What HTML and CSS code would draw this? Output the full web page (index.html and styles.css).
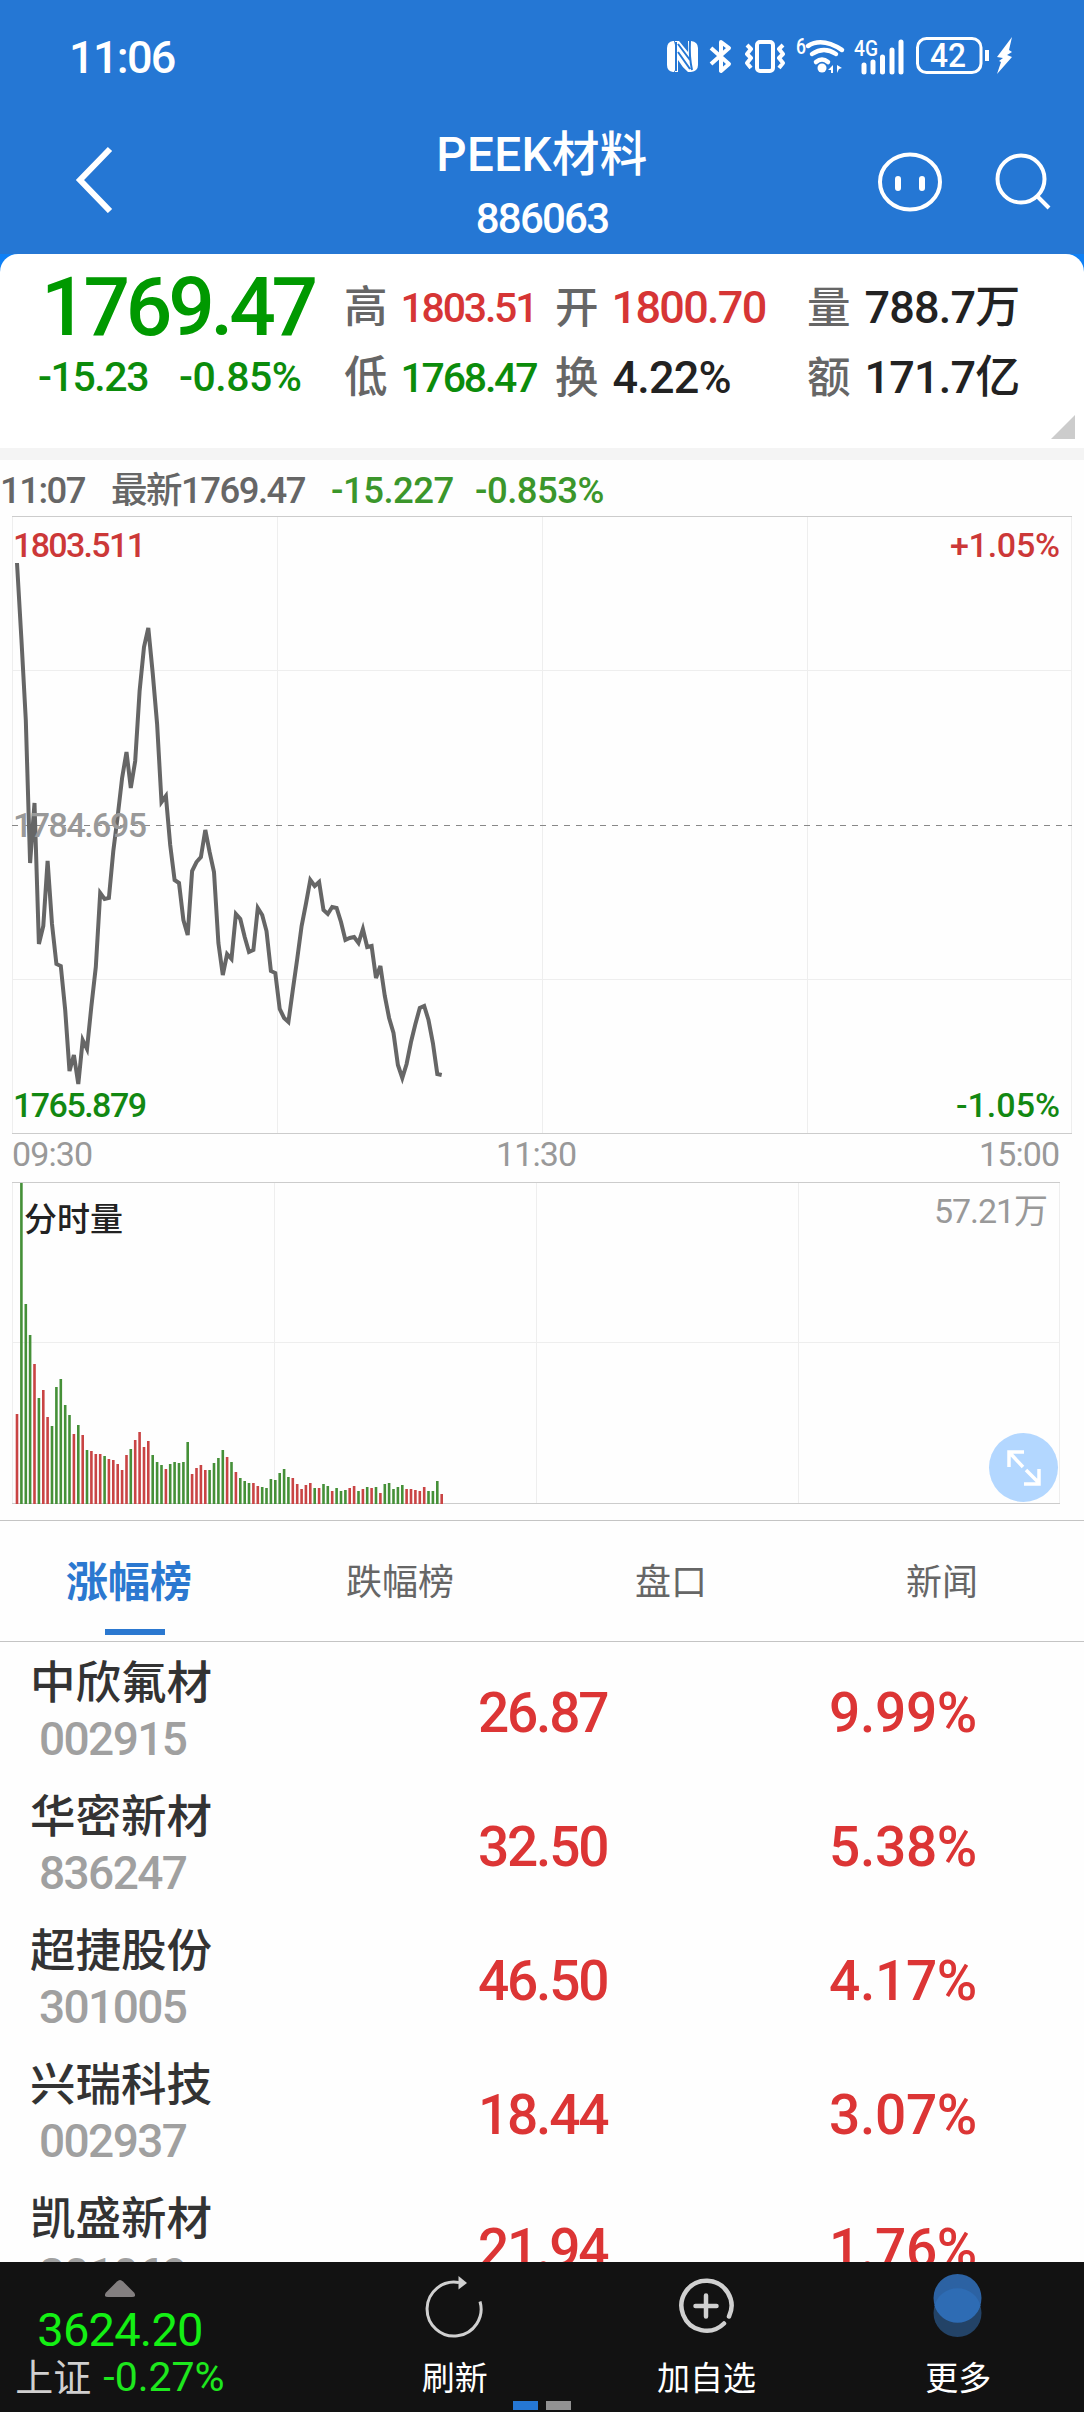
FILE: index.html
```
<!DOCTYPE html>
<html lang="zh-CN">
<head>
    <meta charset="UTF-8">
    <meta name="viewport" content="width=device-width, initial-scale=1.0">
    <title>PEEK材料 886063</title>
    <link rel="stylesheet" href="styles.css">
</head>
<body>
    <div class="app">
        <header class="header">
            <div class="status-bar">
                <span class="status-time">11:06</span>
                <svg class="status-icons" width="352" height="44" viewBox="664 34 352 44">
                    <!-- NFC -->
                    <path class="fill" d="M673 41h1l1 4v25l-1 2h-1q-6-1-6-7V48q0-6 6-7zM675 41h4l9 11V41h3q7 1 7 7v17q0 6-7 7h-3q-6-5-10-12v12h-3z"/>
                    <path class="cut" d="M676 42v29M690 41q-1 15 2 29M678 52l12 17M678 44l12 16"/>
                    <!-- Bluetooth -->
                    <path class="line" d="M711 48l18 16-8 7V42l8 6-18 16"/>
                    <!-- Vibrate -->
                    <rect class="line" x="757" y="42" width="16" height="29" rx="3"/>
                    <path class="line" d="M747 45l4 4-4 5 4 4-4 5 4 5M783 45l-4 4 4 5-4 4 4 5-4 5"/>
                    <!-- Wi-Fi -->
                    <path class="line wifi" d="M808 46q14-9 34 4M812 54q12-8 24 0M816 62q6-5 12 0"/>
                    <circle class="fill" cx="822" cy="68" r="4.5"/>
                    <path class="fill" d="M833 65v8h-2v-3h-3zM837 65l5 3-3 1-2 4z"/>
                    <text class="tiny" x="796" y="54" textLength="10" lengthAdjust="spacingAndGlyphs">6</text>
                    <text class="tiny" x="854" y="56" textLength="24" lengthAdjust="spacingAndGlyphs">4G</text>
                    <!-- Signal -->
                    <path class="line bars" d="M864 65v7M873 62v10M882.500 57v15M892 50v22M901 42v30"/>
                    <!-- Battery -->
                    <rect class="line thin" x="917.500" y="38.500" width="63.500" height="34" rx="9"/>
                    <text class="level" x="930" y="67" textLength="36" lengthAdjust="spacingAndGlyphs">42</text>
                    <path class="line" d="M987 50v11"/>
                    <path class="fill" d="M1012 37l-15 20 6 1-4 3 2 1-4 12 15-17-5-2 5-3-3-2z"/>
                </svg>
            </div>
            <div class="title-bar">
                <svg class="back" width="40" height="68" viewBox="0 0 40 68">
                    <path d="M36 4L6 35l30 31"/>
                </svg>
                <div class="title">
                    <h1 class="title-name">PEEK材料</h1>
                    <div class="title-code">886063</div>
                </div>
                <div class="title-actions">
                    <svg width="68" height="64" viewBox="0 0 68 64">
                        <ellipse cx="34" cy="32" rx="30" ry="27.500"/>
                        <path class="eyes" d="M22 29v9M46 29v9"/>
                    </svg>
                    <svg width="60" height="60" viewBox="0 0 60 60">
                        <circle cx="28" cy="29" r="23.500"/>
                        <path d="M44 46l12 12"/>
                    </svg>
                </div>
            </div>
        </header>

        <div class="quote-wrap">
            <section class="quote">
                <div class="quote-main">
                    <div class="price">1769.47</div>
                    <div class="change"><span>-15.23</span><span class="rate">-0.85%</span></div>
                </div>
                <div class="stats">
                    <div class="stat"><span class="label">高</span><span class="value small up">1803.51</span></div>
                    <div class="stat"><span class="label">开</span><span class="value up">1800.70</span></div>
                    <div class="stat"><span class="label">量</span><span class="value wide">788.7万</span></div>
                    <div class="stat"><span class="label">低</span><span class="value small down">1768.47</span></div>
                    <div class="stat"><span class="label">换</span><span class="value wide">4.22%</span></div>
                    <div class="stat"><span class="label">额</span><span class="value wide">171.7亿</span></div>
                </div>
                <i class="corner"></i>
            </section>
        </div>

        <div class="ticker">
            <span class="ticker-time">11:07</span>
            <span class="ticker-last">最新1769.47</span>
            <span class="ticker-diff">-15.227</span>
            <span class="ticker-rate">-0.853%</span>
        </div>

        <svg class="chart" width="1084" height="666" viewBox="0 0 1084 666">
            <path class="grid" d="M12.500 0v618M277.500 0v618M542.500 0v618M807.500 0v618M1071.500 0v618M12 154.500h1059M12 463.500h1059"/>
            <path class="frame" d="M12 .5h1060M12 617.500h1060"/>
            <path class="middle" d="M12 309.500h1060"/>
            <polyline id="priceLine"/>
            <text class="up" x="13" y="41" textLength="133">1803.511</text>
            <text class="muted" x="13" y="321" textLength="134">1784.695</text>
            <text class="down" x="13" y="601" textLength="134">1765.879</text>
            <text class="up" x="950" y="41" textLength="110">+1.05%</text>
            <text class="down" x="956" y="601" textLength="104">-1.05%</text>
            <text class="muted axis" x="12" y="650" textLength="81">09:30</text>
            <text class="muted axis" x="496" y="650" textLength="81">11:30</text>
            <text class="muted axis" x="979" y="650" textLength="81">15:00</text>
        </svg>

        <div class="volume">
            <svg class="chart" width="1084" height="338" viewBox="0 0 1084 338">
                <path class="grid" d="M12.500 0v321M274.500 0v321M536.500 0v321M798.500 0v321M1059.500 0v321M12 160.500h1047"/>
                <path class="frame" d="M12 .5h1048M12 321.500h1048"/>
                <g id="volumeBars"></g>
                <text class="dark" x="24" y="49">分时量</text>
                <text class="muted axis" x="934" y="41" textLength="114">57.21万</text>
            </svg>
            <button class="expand">
                <svg width="40" height="40" viewBox="0 0 40 40">
                    <path d="M5 19V4h15M5 4l14 15M22 22l13 13M20 36h15V21"/>
                </svg>
            </button>
        </div>

        <nav class="tabs">
            <div class="tab active">涨幅榜</div>
            <div class="tab">跌幅榜</div>
            <div class="tab">盘口</div>
            <div class="tab">新闻</div>
        </nav>

        <main class="list">
            <div class="row">
                <div class="stock"><div class="stock-name">中欣氟材</div><div class="stock-code">002915</div></div>
                <div class="stock-price">26.87</div>
                <div class="stock-rate">9.99%</div>
            </div>
            <div class="row">
                <div class="stock"><div class="stock-name">华密新材</div><div class="stock-code">836247</div></div>
                <div class="stock-price">32.50</div>
                <div class="stock-rate">5.38%</div>
            </div>
            <div class="row">
                <div class="stock"><div class="stock-name">超捷股份</div><div class="stock-code">301005</div></div>
                <div class="stock-price">46.50</div>
                <div class="stock-rate">4.17%</div>
            </div>
            <div class="row">
                <div class="stock"><div class="stock-name">兴瑞科技</div><div class="stock-code">002937</div></div>
                <div class="stock-price">18.44</div>
                <div class="stock-rate">3.07%</div>
            </div>
            <div class="row">
                <div class="stock"><div class="stock-name">凯盛新材</div><div class="stock-code">301069</div></div>
                <div class="stock-price">21.94</div>
                <div class="stock-rate">1.76%</div>
            </div>
        </main>

        <footer class="bottom-bar">
            <div class="index">
                <svg class="index-arrow" width="30" height="17" viewBox="0 0 30 17">
                    <path d="M12 1.500q3-3 6 0l11 11q3 4.500-2 4.500H3q-5 0-2-4.500z"/>
                </svg>
                <div class="index-value">3624.20</div>
                <div class="index-change"><span class="index-name">上证</span><span>-0.27%</span></div>
            </div>
            <div class="action">
                <svg width="64" height="64" viewBox="0 0 64 64">
                    <path d="M57 25.500A27 27 0 1 1 36 6.500"/>
                    <path class="head" d="M35.500 0l8.500 7-8.500 6.500z"/>
                </svg>
                <span>刷新</span>
            </div>
            <div class="action">
                <svg class="plus" width="64" height="64" viewBox="0 0 64 64">
                    <path d="M55 40.500A25 25 0 1 0 50 47.500M21.500 30h21M32 19.500v21"/>
                </svg>
                <span>加自选</span>
            </div>
            <div class="action">
                <svg class="dots" width="64" height="64" viewBox="0 0 64 64">
                    <circle cx="31.500" cy="37" r="24" fill="#234367"/>
                    <circle cx="31.500" cy="22" r="24" fill="#2c62a3"/>
                    <path d="M8.500 29.500a24 24 0 0 1 46 0 24 24 0 0 1-46 0z" fill="#2e6cb4"/>
                </svg>
                <span>更多</span>
            </div>
            <div class="pager"><i class="on"></i><i></i></div>
        </footer>
    </div>

    <script>
        const STEP = 4.378;
        const START = 17;

        // one point per minute, offset from the top of the chart
        const prices = [
            47, 123, 204, 347, 287, 428, 410, 345, 408, 448, 450, 494, 555, 539, 568, 524, 533, 490, 451, 377,
            383, 382, 335, 300, 262, 236, 272, 245, 175, 131, 112, 157, 208, 286, 280, 329, 364, 367, 404, 419,
            355, 346, 341, 314, 336, 356, 427, 459, 438, 443, 398, 403, 421, 436, 434, 392, 399, 415, 455, 457,
            493, 502, 506, 474, 443, 410, 388, 364, 370, 366, 394, 398, 391, 392, 406, 424, 422, 421, 427, 413,
            431, 430, 462, 450, 480, 502, 517, 549, 562, 548, 526, 508, 492, 490, 504, 527, 558, 559
        ];

        // bar height + direction (r = up, g = down)
        const volumes = ('90r 321g 200g 169g 140r 106g 114r 87r 78g 117g 125g 99g 89g 70r 79g 69r 54g 53r 50r 50r ' +
            '48g 45r 44r 40r 34r 49r 55g 64r 72r 57r 63r 49g 42g 39g 35r 40g 42g 41g 42g 62g ' +
            '30r 36r 39r 34r 34g 41g 46g 54g 47r 42g 32r 26g 23g 21g 21r 18r 17g 16g 25g 24g ' +
            '31g 35g 27g 26r 20r 15r 19r 21r 16g 16r 20g 18g 13r 16g 13g 14g 16r 18r 13g 15r ' +
            '17g 16r 17g 11r 20g 21g 15g 17g 19g 15r 15r 14r 13r 17r 13g 13g 23g 10r').split(' ');

        document.getElementById('priceLine').setAttribute('points',
            prices.map((y, i) => (START + i * STEP).toFixed(1) + ',' + y).join(' '));

        const bars = document.getElementById('volumeBars');
        volumes.forEach(function(item, i) {
            const height = parseInt(item, 10);
            const bar = document.createElementNS('http://www.w3.org/2000/svg', 'rect');
            bar.setAttribute('class', item.endsWith('r') ? 'bar-up' : 'bar-down');
            bar.setAttribute('x', (START + i * STEP - 1.3).toFixed(1));
            bar.setAttribute('y', 322 - height);
            bar.setAttribute('width', 2.6);
            bar.setAttribute('height', height);
            bars.appendChild(bar);
        });
    </script>
</body>
</html>
```
FILE: styles.css
```
* {
    margin: 0;
    padding: 0;
    box-sizing: border-box;
}

body {
    font-family: Roboto, 'Noto Sans CJK SC', sans-serif;
    background: #fefefe;
    color: #222;
}

.app {
    width: 1084px;
    height: 2412px;
    display: flex;
    flex-direction: column;
    overflow: hidden;
}

.up {
    color: #d63535;
    fill: #cc3838;
}

.down {
    color: #0b8c0b;
    fill: #128812;
}

/* Header */
.header {
    height: 254px;
    flex: none;
    background: #2577d4;
    color: #fff;
}

.status-bar {
    height: 112px;
    padding: 34px 68px 0 69px;
    display: flex;
    justify-content: space-between;
}

.status-time {
    font-size: 45px;
    font-weight: 500;
    line-height: 48px;
    letter-spacing: -1.7px;
}

.status-icons .fill {
    fill: #fff;
}

.status-icons .line {
    fill: none;
    stroke: #fff;
    stroke-width: 4;
    stroke-linejoin: round;
}

.status-icons .thin {
    stroke-width: 3;
}

.status-icons .wifi {
    stroke-width: 4.5;
    stroke-linecap: round;
}

.status-icons .bars {
    stroke-width: 5;
    stroke-linecap: round;
}

.status-icons .cut {
    fill: none;
    stroke: #2577d4;
    stroke-width: 2;
}

.status-icons text {
    fill: #fff;
    font-weight: 500;
}

.tiny {
    font-size: 22px;
}

.level {
    font-size: 34px;
}

.title-bar {
    height: 142px;
    display: grid;
    grid-template-columns: 300px 1fr 300px;
}

.back {
    margin: 33px 0 0 74px;
    fill: none;
    stroke: #fff;
    stroke-width: 6;
}

.title {
    text-align: center;
    padding-top: 12px;
}

.title-name {
    font-size: 47.5px;
    font-weight: 500;
    line-height: 62px;
    letter-spacing: 0.4px;
}

.title-code {
    padding-top: 3px;
    font-size: 42px;
    font-weight: 500;
    line-height: 60px;
    letter-spacing: -1.8px;
}

.title-actions {
    display: flex;
    gap: 49px;
    padding: 38px 0 0 92px;
    fill: none;
    stroke: #fff;
    stroke-width: 4;
}

.eyes {
    stroke-width: 6;
    stroke-linecap: round;
}

/* Quote summary */
.quote-wrap {
    flex: none;
    background: #0f80f5;
    border-bottom: 12px solid #f4f4f4;
}

.quote {
    position: relative;
    height: 194px;
    display: grid;
    grid-template-columns: 344px 1fr;
    background: #fff;
    border-radius: 18px 18px 0 0;
}

.quote-main {
    padding: 11px 0 0 38px;
    color: #090;
}

.price {
    padding-left: 3px;
    font-size: 82px;
    font-weight: 500;
    line-height: 84px;
    letter-spacing: -4.2px;
}

.change {
    margin-top: 6px;
    display: flex;
    font-size: 41px;
    font-weight: 500;
    line-height: 44px;
    letter-spacing: -1.4px;
    color: #0b8c0b;
}

.change span {
    width: 141px;
}

.change .rate {
    letter-spacing: -0.5px;
}

.stats {
    padding-top: 19px;
    display: grid;
    grid-template-columns: 211px 252px 1fr;
    grid-template-rows: 70px 70px;
}

.stat {
    display: flex;
    align-items: baseline;
    gap: 13px;
    line-height: 70px;
}

.label {
    font-size: 43.5px;
    font-weight: 500;
    color: #666;
}

.value {
    font-size: 45px;
    font-weight: 500;
    letter-spacing: -1.7px;
}

.value.wide {
    padding-left: 1px;
    letter-spacing: -0.8px;
}

.value.small {
    font-size: 41px;
    letter-spacing: -2.2px;
}

.corner {
    position: absolute;
    right: 9px;
    bottom: 9px;
    border-left: 24px solid transparent;
    border-bottom: 24px solid #ccc;
}

/* Latest tick */
.ticker {
    flex: none;
    height: 56px;
    padding-top: 3px;
    display: flex;
    font-size: 36.5px;
    font-weight: 500;
    line-height: 56px;
    letter-spacing: -1.5px;
    color: #666;
}

.ticker-time {
    width: 111px;
}

.ticker-last {
    width: 220px;
}

.ticker-diff {
    width: 144px;
}

.ticker-diff,
.ticker-rate {
    letter-spacing: -0.5px;
    color: #3b962b;
}

/* Charts */
.chart {
    display: block;
    flex: none;
    font-size: 34px;
    font-weight: 500;
}

.axis {
    font-weight: 400;
}

.grid {
    stroke: #eee;
    fill: none;
}

.frame {
    stroke: #ccc;
}

.middle {
    stroke: #888;
    stroke-dasharray: 6 6;
}

.muted {
    fill: #999;
}

.dark {
    font-size: 33px;
    fill: #222;
}

#priceLine {
    fill: none;
    stroke: #666;
    stroke-width: 4;
}

.bar-up {
    fill: #c94444;
}

.bar-down {
    fill: #459038;
}

.volume {
    position: relative;
    flex: none;
    height: 338px;
}

.expand {
    position: absolute;
    left: 989px;
    top: 251px;
    width: 69px;
    height: 69px;
    border: none;
    border-radius: 50%;
    background: #b3d7ff;
    display: flex;
    align-items: center;
    justify-content: center;
}

.expand path {
    fill: none;
    stroke: #fff;
    stroke-width: 3.5;
}

/* Tabs */
.tabs {
    flex: none;
    height: 122px;
    display: grid;
    grid-template-columns: repeat(4, 1fr);
    border-top: 1px solid #c4c4c4;
    border-bottom: 1px solid #c4c4c4;
}

.tab {
    position: relative;
    padding: 2px 13px 0 0;
    text-align: center;
    font-size: 36px;
    line-height: 120px;
    height: 120px;
    color: #666;
}

.tab.active {
    font-size: 42px;
    font-weight: 700;
    color: #2b78d0;
}

.tab.active::after {
    content: "";
    position: absolute;
    left: 105px;
    bottom: 6px;
    width: 60px;
    height: 6px;
    background: #2b78d0;
}

/* Stock list */
.list {
    flex: 1;
    min-height: 0;
    overflow: hidden;
}

.row {
    height: 134px;
    display: grid;
    grid-template-columns: 430px 227px 1fr;
    padding-left: 30px;
}

.stock-name {
    margin-top: 10px;
    font-size: 45.5px;
    font-weight: 500;
    line-height: 64px;
    color: #333;
}

.stock-code {
    margin-top: -2px;
    padding-left: 9px;
    font-size: 46px;
    font-weight: 500;
    line-height: 50px;
    letter-spacing: -1.6px;
    color: #a0a0a0;
}

.stock-price,
.stock-rate {
    font-size: 55px;
    font-weight: 500;
    line-height: 142px;
    color: #dc3535;
}

.stock-price {
    padding-left: 18px;
    letter-spacing: -2.2px;
}

.stock-rate {
    padding-left: 142px;
    letter-spacing: -0.3px;
}

/* Bottom bar */
.bottom-bar {
    position: relative;
    flex: none;
    height: 150px;
    display: grid;
    grid-template-columns: 329px repeat(3, 1fr);
    background: #121212;
    color: #fff;
}

.index {
    width: 240px;
    padding-top: 18px;
    text-align: center;
    color: #1ee81e;
}

.index-arrow {
    display: block;
    margin: 0 auto;
    fill: #837f80;
}

.index-value {
    font-size: 47px;
    line-height: 60px;
    letter-spacing: -0.8px;
    margin-top: 3px;
    color: #14f014;
}

.index-change {
    display: flex;
    justify-content: center;
    align-items: baseline;
    gap: 12px;
    padding-top: 1px;
    font-size: 41px;
    line-height: 32px;
}

.index-name {
    font-size: 38px;
    color: #d0cfcf;
}

.action {
    display: flex;
    flex-direction: column;
    align-items: center;
    padding-top: 14px;
    font-size: 33px;
    line-height: 44px;
}

.action svg {
    flex: none;
    overflow: visible;
    margin-bottom: 17px;
    fill: none;
    stroke: #d0d0d0;
    stroke-width: 3;
}

.action .head {
    fill: #d0d0d0;
    stroke: none;
}

.action .plus {
    stroke-width: 4.5;
    stroke-linecap: round;
}

.action .dots {
    stroke: none;
}

.pager {
    position: absolute;
    left: 513px;
    bottom: 2px;
    display: flex;
    gap: 8px;
}

.pager i {
    width: 25px;
    height: 9px;
    background: #929292;
}

.pager .on {
    background: #2577d4;
}
```
